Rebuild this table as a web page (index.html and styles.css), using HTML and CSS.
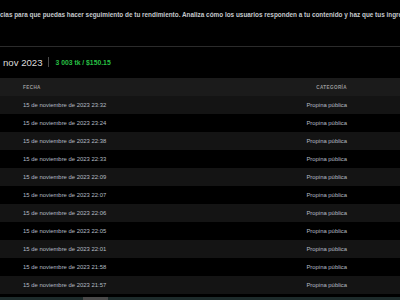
FILE: index.html
```html
<!DOCTYPE html>
<html lang="es">
<head>
<meta charset="utf-8">
<link rel="stylesheet" href="styles.css">
</head>
<body>
<div class="page">
  <p class="intro">cias para que puedas hacer seguimiento de tu rendimiento. Analiza cómo los usuarios responden a tu contenido y haz que tus ingresos crezcan.</p>
  <div class="summary">
    <span class="month">nov 2023</span>
    <span class="divider"></span>
    <span class="total">3 003 tk / $150.15</span>
  </div>
  <div class="table">
    <div class="row head"><span>Fecha</span><span class="cat">Categoría</span></div>
    <div class="row"><span>15 de noviembre de 2023 23:32</span><span class="cat">Propina pública</span></div>
    <div class="row"><span>15 de noviembre de 2023 23:24</span><span class="cat">Propina pública</span></div>
    <div class="row"><span>15 de noviembre de 2023 22:38</span><span class="cat">Propina pública</span></div>
    <div class="row"><span>15 de noviembre de 2023 22:33</span><span class="cat">Propina pública</span></div>
    <div class="row"><span>15 de noviembre de 2023 22:09</span><span class="cat">Propina pública</span></div>
    <div class="row"><span>15 de noviembre de 2023 22:07</span><span class="cat">Propina pública</span></div>
    <div class="row"><span>15 de noviembre de 2023 22:06</span><span class="cat">Propina pública</span></div>
    <div class="row"><span>15 de noviembre de 2023 22:05</span><span class="cat">Propina pública</span></div>
    <div class="row"><span>15 de noviembre de 2023 22:01</span><span class="cat">Propina pública</span></div>
    <div class="row"><span>15 de noviembre de 2023 21:58</span><span class="cat">Propina pública</span></div>
    <div class="row"><span>15 de noviembre de 2023 21:57</span><span class="cat">Propina pública</span></div>
  </div>
  <div class="scrollbar"><span class="thumb"></span></div>
</div>
</body>
</html>
```
FILE: styles.css
```css
html, body {
  margin: 0;
  padding: 0;
  background: #000;
  overflow: hidden;
}
.page {
  width: 400px;
  height: 300px;
  font-family: "Liberation Sans", Arial, sans-serif;
  display: flex;
  flex-direction: column;
}
.intro {
  margin: 0;
  padding: 11px 0 0 0;
  height: 47px;
  box-sizing: border-box;
  white-space: nowrap;
  overflow: hidden;
  font-size: 6.4px;
  font-weight: bold;
  line-height: 8px;
  color: #c4c8cc;
  border-bottom: 1px solid #2b2b2b;
  flex-shrink: 0;
}
.summary {
  height: 31px;
  padding: 0 0 1px 3px;
  display: flex;
  align-items: center;
  gap: 6px;
  box-sizing: border-box;
  flex-shrink: 0;
}
.month {
  font-size: 9.6px;
  color: #dcdcdc;
}
.divider {
  width: 1px;
  height: 10px;
  background: #4a4a4a;
}
.total {
  font-size: 6.8px;
  font-weight: bold;
  color: #27c044;
}
.table {
  display: flex;
  flex-direction: column;
  flex-shrink: 0;
}
.row {
  height: 18px;
  display: flex;
  align-items: center;
  justify-content: space-between;
  padding: 0 53px 0 23px;
  font-size: 5.9px;
  color: #b4bcc4;
}
.row:nth-child(even) {
  background: #141414;
}
.row.head {
  background: #1b1b1b;
  font-size: 4.6px;
  font-weight: bold;
  letter-spacing: 0.4px;
  text-transform: uppercase;
  color: #9a9a9a;
}
.cat {
  text-align: right;
}
.scrollbar {
  margin-top: 3px;
  height: 3px;
  background: #1d2b2b;
  position: relative;
  flex-shrink: 0;
}
.thumb {
  position: absolute;
  left: 83px;
  width: 25px;
  top: 0;
  bottom: 0;
  background: #4a4a4a;
}
```
